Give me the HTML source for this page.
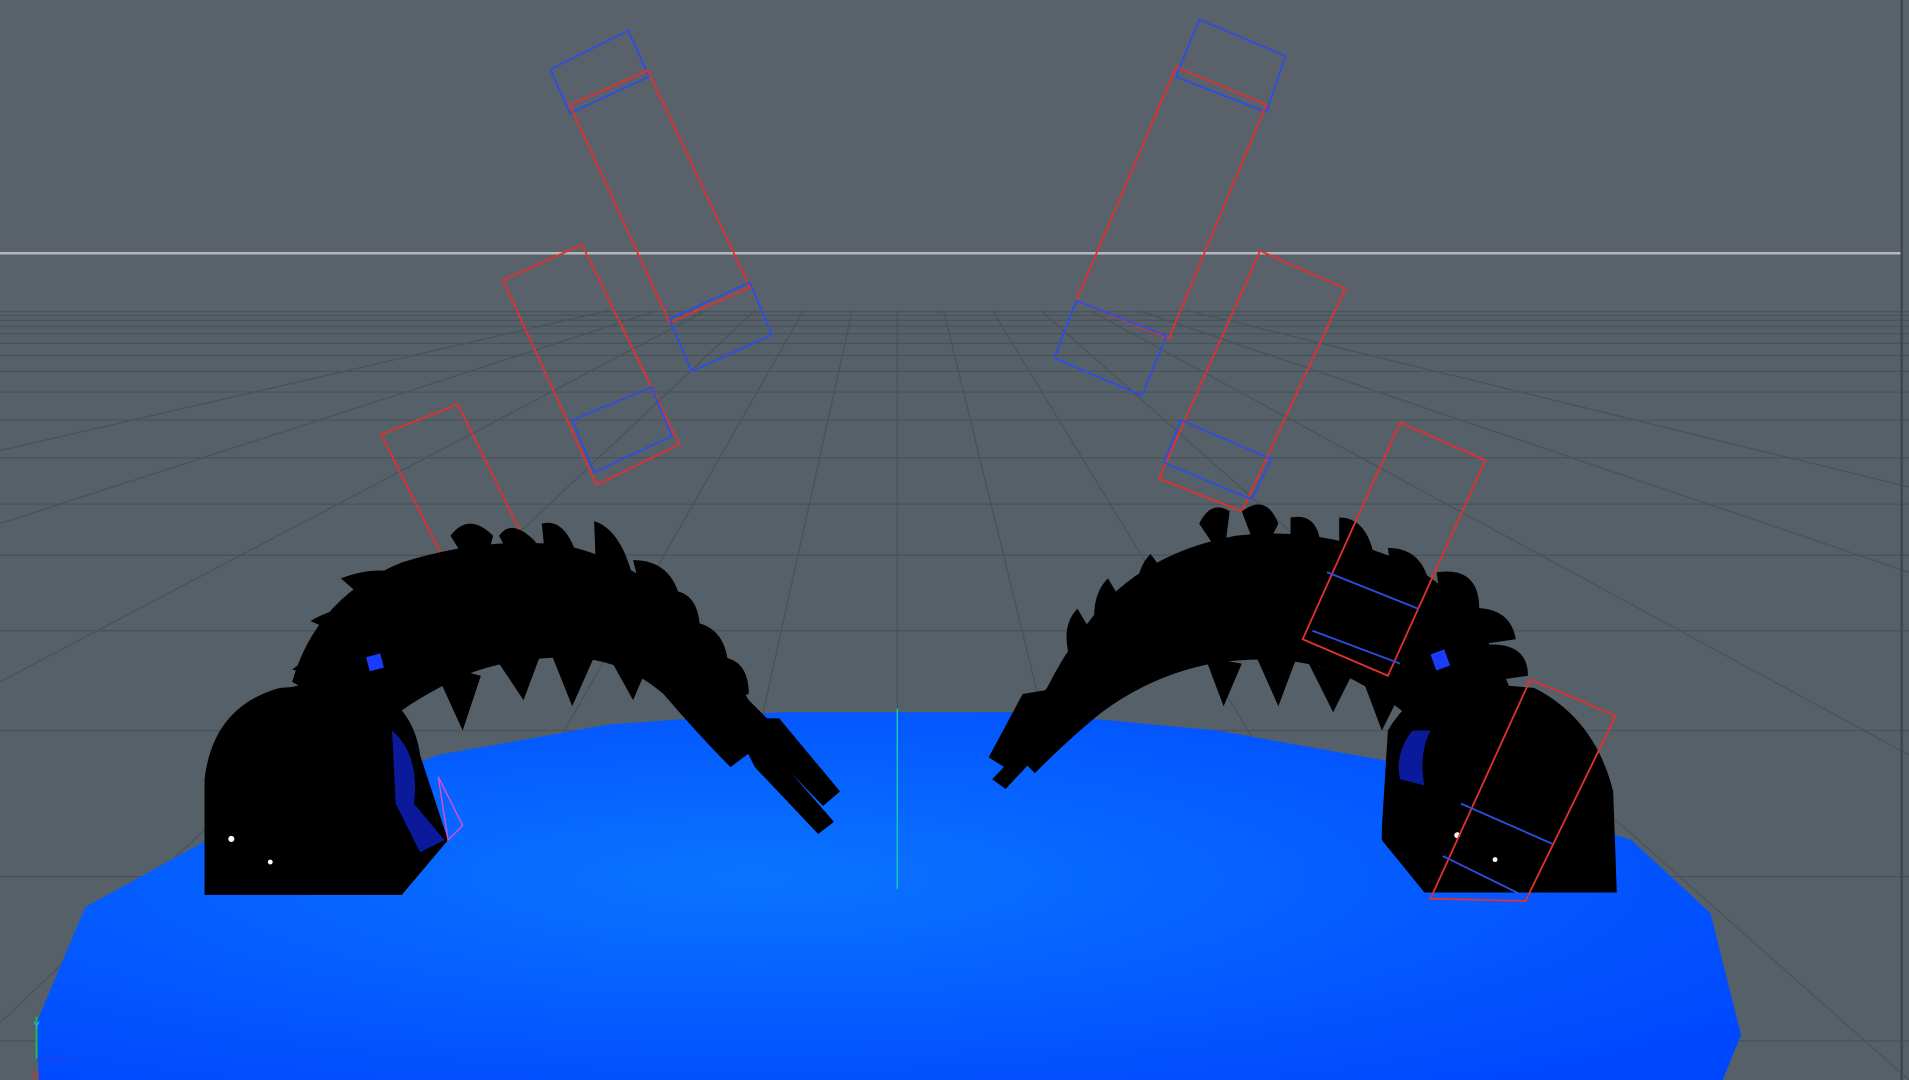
<!DOCTYPE html>
<html><head><meta charset="utf-8"><style>
html,body{margin:0;padding:0;width:1909px;height:1080px;overflow:hidden;background:#59626a}
svg{display:block}
text{font-family:"Liberation Sans",sans-serif}
</style></head><body>
<svg width="1909" height="1080" viewBox="0 0 1568 887" preserveAspectRatio="none" xmlns="http://www.w3.org/2000/svg">
<defs>
<radialGradient id="bl" cx="0.42" cy="0.45" r="0.7">
<stop offset="0" stop-color="#0a74ff"/><stop offset="1" stop-color="#0048ff"/>
</radialGradient>
</defs>
<rect width="1568" height="887" fill="#59626a"/>
<rect x="0" y="255" width="1568" height="632" fill="#566068"/>
<line x1="0" y1="208" x2="1562" y2="208" stroke="#b4b8bb" stroke-width="2"/>
<g stroke="#454d54" stroke-width="1" fill="none" opacity="0.75">
<line x1="0" y1="256" x2="1568" y2="256"/><line x1="0" y1="259" x2="1568" y2="259"/>
<line x1="0" y1="263" x2="1568" y2="263"/><line x1="0" y1="268" x2="1568" y2="268"/>
<line x1="0" y1="274" x2="1568" y2="274"/><line x1="0" y1="282" x2="1568" y2="282"/>
<line x1="0" y1="292" x2="1568" y2="292"/><line x1="0" y1="305" x2="1568" y2="305"/>
<line x1="0" y1="322" x2="1568" y2="322"/><line x1="0" y1="345" x2="1568" y2="345"/>
<line x1="0" y1="376" x2="1568" y2="376"/><line x1="0" y1="414" x2="1568" y2="414"/>
<line x1="0" y1="456" x2="1568" y2="456"/><line x1="0" y1="518" x2="1568" y2="518"/>
<line x1="0" y1="600" x2="1568" y2="600"/><line x1="0" y1="720" x2="1568" y2="720"/>
<line x1="0" y1="855" x2="1568" y2="855"/>
<line x1="737" y1="255" x2="737" y2="887"/>
<line x1="700" y1="255" x2="560" y2="887"/><line x1="660" y1="255" x2="300" y2="887"/>
<line x1="620" y1="255" x2="0" y2="840"/><line x1="580" y1="255" x2="0" y2="560"/>
<line x1="540" y1="255" x2="0" y2="430"/><line x1="500" y1="255" x2="0" y2="370"/>
<line x1="775" y1="255" x2="930" y2="887"/><line x1="815" y1="255" x2="1200" y2="887"/>
<line x1="855" y1="255" x2="1568" y2="887"/><line x1="895" y1="255" x2="1568" y2="620"/>
<line x1="935" y1="255" x2="1568" y2="470"/><line x1="975" y1="255" x2="1568" y2="400"/>
</g>
<line x1="1562" y1="0" x2="1562" y2="887" stroke="#3f464c" stroke-width="2"/>
<polygon points="30,840 70,745 170,690 360,620 500,595 640,585 840,585 1000,600 1140,625 1340,690 1405,750 1430,850 1415,887 32,887" fill="url(#bl)"/>
<line x1="737" y1="582" x2="737" y2="730" stroke="#19c8b0" stroke-width="1.2"/>
<g fill="none" stroke-width="1.5">
<polygon points="452,57 516,25 533,63 468,93" stroke="#2f4de0"/>
<polygon points="468,86 532,58 616,236 550,265" stroke="#e03030"/>
<polygon points="550,262 616,232 634,275 568,305" stroke="#2f4de0"/>
<polygon points="413,230 478,201 558,365 490,398" stroke="#e03030"/>
<polygon points="470,345 535,318 552,358 488,388" stroke="#2f4de0"/>
<polygon points="313,357 376,332 432,446 370,470" stroke="#e03030"/>
<polygon points="985,16 1056,46 1040,92 966,63" stroke="#2f4de0"/>
<polygon points="966,55 1040,86 960,278 884,247" stroke="#e03030"/>
<polygon points="884,247 958,276 938,325 866,294" stroke="#2f4de0"/>
<polygon points="1035,206 1105,237 1020,420 952,393" stroke="#e03030"/>
<polygon points="970,345 1044,377 1028,410 956,380" stroke="#2f4de0"/>
</g>
<g fill="#000">
<path d="M168,735 L168,640 Q175,580 230,565 L300,560 Q340,580 345,620 L368,690 L330,735 Z"/>
<path d="M240,560 Q260,490 330,462 Q400,440 465,448 Q525,462 565,505 Q595,540 615,575 L640,600 L600,630 Q575,605 545,570 Q510,540 465,540 Q410,540 370,560 Q330,580 310,600 Z"/>
<path d="M600,590 L640,590 L690,650 L676,662 L650,635 L685,675 L672,685 L620,630 Z"/>
<g>
<path d="M370,440 Q385,420 405,440 L395,480 Z"/><path d="M410,440 Q420,425 440,445 L430,480Z"/>
<path d="M445,430 Q465,425 475,460 L450,480Z"/><path d="M488,428 Q510,435 520,475 L490,480Z"/>
<path d="M520,460 Q555,460 560,500 L530,500Z"/><path d="M550,485 Q575,485 575,520 L555,520Z"/>
<path d="M560,510 Q595,510 598,545 L570,545Z"/><path d="M580,540 Q615,535 615,570 L590,575Z"/>
<path d="M280,475 Q320,460 345,480 L320,510Z"/><path d="M255,510 Q290,490 320,505 L300,530Z"/>
<path d="M240,550 Q270,525 300,540 L285,560Z"/><path d="M215,575 Q250,555 275,565 L260,585Z"/>
<path d="M400,530 L430,575 L445,535Z"/><path d="M450,530 L470,580 L490,535Z"/>
<path d="M495,530 L520,575 L535,540Z"/><path d="M355,545 L380,600 L395,555Z"/>
</g>
</g>
<path d="M322,600 Q345,620 340,660 L365,690 L345,700 L325,660 Z" fill="#0a1a9a"/>
<rect x="302" y="538" width="12" height="12" fill="#1a3cff" transform="rotate(-15 308 544)"/>
<circle cx="190" cy="689" r="2.5" fill="#fff"/><circle cx="222" cy="708" r="2" fill="#fff"/>
<polygon points="360,638 380,678 368,690" fill="none" stroke="#d050d0" stroke-width="1.2"/>
<g fill="#000">
<path d="M1135,680 L1140,600 Q1160,565 1200,560 L1260,565 Q1310,590 1325,650 L1328,733 L1170,733 L1135,690 Z"/>
<path d="M1240,565 Q1210,485 1145,458 Q1080,432 1015,440 Q950,452 910,492 Q880,525 860,565 L825,610 L850,635 Q880,605 905,585 Q945,555 995,545 Q1060,535 1105,555 Q1145,575 1170,600 Z"/>
<path d="M870,565 L840,570 L812,622 L828,632 L848,605 L815,640 L826,648 L880,590 Z"/>
<g>
<path d="M985,430 Q995,410 1010,420 L1005,460Z"/><path d="M1020,420 Q1040,405 1050,430 L1035,460Z"/>
<path d="M1060,425 Q1085,420 1085,455 L1060,465Z"/><path d="M1100,425 Q1125,425 1130,465 L1100,470Z"/>
<path d="M1140,450 Q1170,450 1175,485 L1145,490Z"/><path d="M1180,470 Q1215,465 1215,500 L1185,505Z"/>
<path d="M1200,500 Q1240,495 1245,525 L1210,530Z"/><path d="M1215,530 Q1255,525 1255,555 L1220,560Z"/>
<path d="M945,455 Q930,470 935,500 L960,475Z"/><path d="M910,475 Q895,490 900,520 L925,500Z"/>
<path d="M885,500 Q870,515 880,545 L900,525Z"/>
<path d="M990,540 L1005,580 L1020,545Z"/><path d="M1030,535 L1050,580 L1065,540Z"/>
<path d="M1075,545 L1095,585 L1110,555Z"/><path d="M1120,560 L1135,600 L1150,570Z"/>
</g>
</g>
<path d="M1160,600 Q1145,620 1150,640 L1170,645 Q1165,620 1175,600 Z" fill="#0a1a9a"/>
<rect x="1177" y="535" width="12" height="14" fill="#1a3cff" transform="rotate(-20 1183 542)"/>
<circle cx="1197" cy="686" r="2.5" fill="#fff"/><circle cx="1228" cy="706" r="2" fill="#fff"/>
<g fill="none" stroke-width="1.5">
<polygon points="1150,347 1220,378 1140,555 1070,525" stroke="#e03030"/>
<line x1="1090" y1="470" x2="1165" y2="500" stroke="#2f4de0"/>
<line x1="1078" y1="518" x2="1150" y2="545" stroke="#2f4de0"/>
<polygon points="1257,558 1327,588 1253,740 1175,738" stroke="#e03030"/>
<line x1="1200" y1="660" x2="1275" y2="693" stroke="#2f4de0"/>
<line x1="1185" y1="703" x2="1250" y2="735" stroke="#2f4de0"/>
</g>
<line x1="30" y1="835" x2="30" y2="870" stroke="#22c040" stroke-width="1.5"/>
<line x1="30" y1="870" x2="55" y2="870" stroke="#2040e0" stroke-width="1.5"/>
<text x="27" y="845" font-size="9" fill="#30b0ff">Y</text>
<text x="57" y="873" font-size="9" fill="#2040e0">Z</text>
<text x="26" y="886" font-size="9" fill="#e03030">X</text>
</svg>
</body></html>
